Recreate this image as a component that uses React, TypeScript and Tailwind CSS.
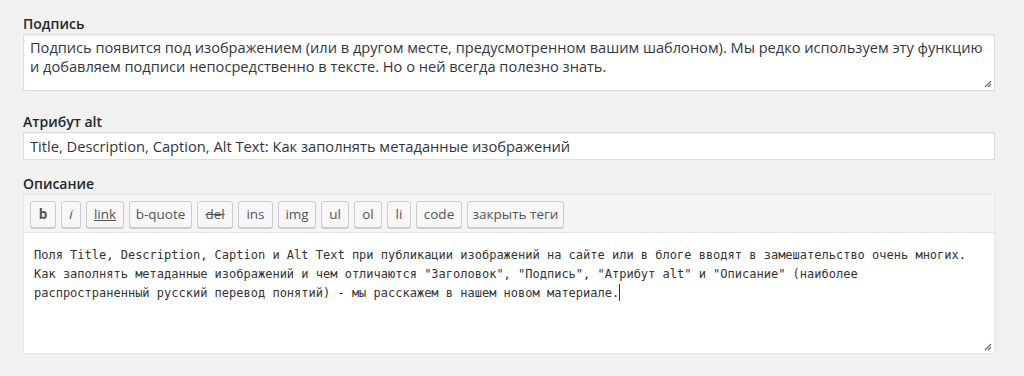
import React from "react";

// Форма метаданных вложения (подпись, alt, описание) — стиль админки WP

const buttons = [
  { label: "b", cls: "w-[26px] font-bold" },
  { label: "i", cls: "w-[20px] italic" },
  { label: "link", cls: "w-[38px] underline" },
  { label: "b-quote", cls: "w-[63px]" },
  { label: "del", cls: "w-[36px] line-through" },
  { label: "ins", cls: "w-[35px]" },
  { label: "img", cls: "w-[38px]" },
  { label: "ul", cls: "w-[28px]" },
  { label: "ol", cls: "w-[28px]" },
  { label: "li", cls: "w-[24px]" },
  { label: "code", cls: "w-[46px]" },
  { label: "закрыть теги", cls: "w-[97px]" },
];

const Grip = () => (
  <svg
    className="absolute right-[2px] bottom-[2px]"
    width="8"
    height="8"
    viewBox="0 0 8 8"
    aria-hidden
  >
    <path d="M7 1 L1 7 M7 4 L4 7" stroke="#6b6b6b" strokeWidth="1.2" />
  </svg>
);

const Label = ({ children }: { children: React.ReactNode }) => (
  <div className="text-[14px] leading-[18px] font-semibold text-[#23282d]">{children}</div>
);

export default function App() {
  return (
    <div
      className="w-[1024px] h-[376px] bg-[#f1f1f1] overflow-hidden"
      style={{ fontFamily: '"Open Sans", "Noto Sans", sans-serif' }}
    >
      <div className="ml-[23px] w-[972px] pt-[15px] flex flex-col">
        {/* ─── Подпись ─── */}
        <Label>Подпись</Label>
        <div className="relative mt-[1px] h-[57px] bg-white border border-[#dddddd] shadow-[inset_0_1px_2px_rgba(0,0,0,0.07)] px-[6px] pt-[3px] text-[14.6px] leading-[19px] text-[#32373c]">
          Подпись появится под изображением (или в другом месте, предусмотренном вашим шаблоном). Мы
          редко используем эту функцию и добавляем подписи непосредственно в тексте. Но о ней всегда
          полезно знать.
          <Grip />
        </div>

        {/* ─── Атрибут alt ─── */}
        <div className="mt-[22px]">
          <Label>Атрибут alt</Label>
        </div>
        <div className="mt-[1px] h-[28px] bg-white border border-[#dddddd] shadow-[inset_0_1px_2px_rgba(0,0,0,0.07)] px-[6px] flex items-center text-[14.7px] text-[#32373c]">
          Title, Description, Caption, Alt Text: Как заполнять метаданные изображений
        </div>

        {/* ─── Описание ─── */}
        <div className="mt-[15px]">
          <Label>Описание</Label>
        </div>
        <div className="mt-[1px] border border-[#e5e5e5]">
          <div className="bg-[#f5f5f5] border-b border-[#e5e5e5] h-[38px] px-[6px] pt-[6px] flex gap-[5px]">
            {buttons.map((b) => (
              <button
                key={b.label}
                className={`${b.cls} h-[27px] shrink-0 rounded-[3px] border border-[#cccccc] bg-[#f7f7f7] shadow-[0_1px_0_#cccccc] text-[13.5px] text-[#555555] leading-none flex items-center justify-center`}
              >
                {b.label}
              </button>
            ))}
          </div>
          <div
            className="relative h-[120px] bg-white pl-[10px] pr-[20px] pt-[13px] text-[12px] leading-[19px] text-[#333333]"
            style={{ fontFamily: '"DejaVu Sans Mono", "Liberation Mono", monospace' }}
          >
            Поля Title, Description, Caption и Alt Text при публикации изображений на сайте или в блоге
            вводят в замешательство очень многих. Как заполнять метаданные изображений и чем отличаются
            "Заголовок", "Подпись", "Атрибут alt" и "Описание" (наиболее распространенный русский
            перевод понятий) - мы расскажем в нашем новом материале.
            <span className="inline-block w-px h-[17px] bg-[#333333] align-[-4px]" />
            <Grip />
          </div>
        </div>
      </div>
    </div>
  );
}
